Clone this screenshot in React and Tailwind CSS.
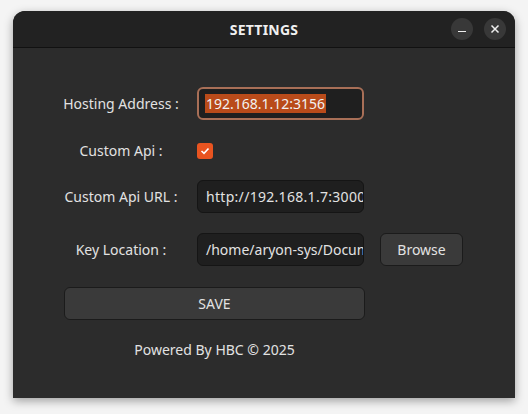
import React from "react";

function Label({ children }) {
  return (
    <div className="w-[142px] shrink-0 text-center text-[14px] text-[#e2e2e2]">{children}</div>
  );
}

export default function App() {
  return (
    <div className="w-[528px] h-[414px] bg-[#f4f4f4] pt-[11px] pl-[13px]" style={{ fontFamily: '"Noto Sans", "Open Sans", sans-serif' }}>
      <div className="w-[502px] h-[387px] rounded-t-[12px] overflow-hidden flex flex-col shadow-[0_3px_10px_rgba(0,0,0,0.35)] bg-[#2c2c2c]">
        <div className="h-[37px] bg-[#222222] border-b border-[#111111] shrink-0 flex items-center relative">
          <div className="flex-1 text-center text-[14px] font-bold text-[#f0f0f0] tracking-[0.2px]">SETTINGS</div>
          <div className="absolute right-[9px] top-[7px] flex gap-[11px]">
            <div className="w-[22px] h-[22px] rounded-full bg-[#383838] flex items-center justify-center">
              <div className="w-[8px] h-[1.5px] bg-[#eeeeee] mt-[5px]"></div>
            </div>
            <div className="w-[22px] h-[22px] rounded-full bg-[#383838] flex items-center justify-center">
              <svg width="10" height="10" viewBox="0 0 10 10"><path d="M1.5 1.5 L8.5 8.5 M8.5 1.5 L1.5 8.5" stroke="#eeeeee" strokeWidth="1.5" /></svg>
            </div>
          </div>
        </div>
        <div className="flex flex-col pl-[37px] pt-[39px]">
          <div className="flex items-center h-[33px]">
            <Label>Hosting Address :</Label>
            <div className="ml-[5px] w-[167px] h-[33px] rounded-[6px] border-2 border-[#a86f57] bg-[#1f1f1f] flex items-center pl-[6px]">
              <span className="bg-[#b94b1a] text-[#f2f2f2] text-[14px] leading-[19px] px-[1px]">192.168.1.12:3156</span>
            </div>
          </div>
          <div className="flex items-center h-[33px] mt-[14px]">
            <Label>Custom Api :</Label>
            <div className="ml-[5px] w-[16px] h-[16px] rounded-[3px] bg-[#e95420] flex items-center justify-center">
              <svg width="10" height="8" viewBox="0 0 10 8"><path d="M1.5 4 L4 6.3 L8.5 1.5" fill="none" stroke="#ffffff" strokeWidth="1.6" /></svg>
            </div>
          </div>
          <div className="flex items-center h-[33px] mt-[13px]">
            <Label>Custom Api URL :</Label>
            <div className="ml-[5px] w-[167px] h-[33px] rounded-[6px] border border-[#151515] bg-[#1f1f1f] flex items-center pl-[8px] overflow-hidden whitespace-nowrap text-[14px] tracking-[0.3px] text-[#e2e2e2]">http://192.168.1.7:3000</div>
          </div>
          <div className="flex items-center h-[33px] mt-[20px]">
            <Label>Key Location :</Label>
            <div className="ml-[5px] w-[167px] h-[33px] rounded-[6px] border border-[#151515] bg-[#1f1f1f] flex items-center pl-[8px] overflow-hidden whitespace-nowrap text-[14px] text-[#e2e2e2]">/home/aryon-sys/Documents</div>
            <div className="ml-[16px] w-[83px] h-[33px] rounded-[6px] border border-[#1b1b1b] bg-[#3a3a3a] flex items-center justify-center text-[14px] text-[#e2e2e2]">Browse</div>
          </div>
          <div className="ml-[14px] mt-[21px] w-[301px] h-[33px] rounded-[6px] border border-[#1b1b1b] bg-[#3a3a3a] flex items-center justify-center text-[14px] text-[#e2e2e2]">SAVE</div>
          <div className="ml-[14px] mt-[19px] w-[301px] text-center text-[14px] text-[#e2e2e2]">Powered By HBC © 2025</div>
        </div>
      </div>
    </div>
  );
}
